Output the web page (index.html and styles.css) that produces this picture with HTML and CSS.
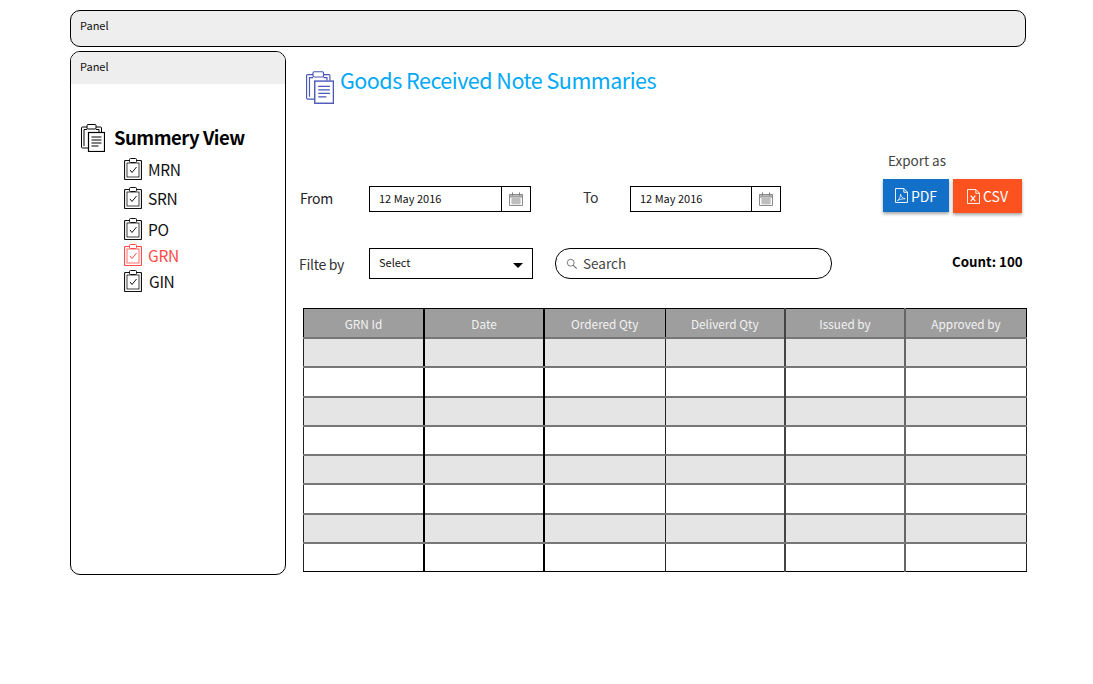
FILE: index.html
```html
<!DOCTYPE html>
<html lang="en">
<head>
    <meta charset="utf-8" />
    <title>Goods Received Note Summaries</title>
    <link rel="stylesheet" href="styles.css">
</head>
<body>
    <svg class="defs" width="0" height="0">
        <symbol id="iconStack" viewBox="0 0 24 28">
            <path d="M6 3H1.500A1 1 0 0 0 .5 4v19a1 1 0 0 0 1 1H7" fill="none" stroke="currentColor" stroke-width="1"/>
            <path d="M15 3h4.500a1 1 0 0 1 1 1v4" fill="none" stroke="currentColor" stroke-width="1"/>
            <path d="M3 22V5.500h3M15 5.500h3V8" fill="none" stroke="currentColor" stroke-width="1"/>
            <rect x="6" y=".5" width="9" height="4.500" rx="1" fill="#fff" stroke="currentColor" stroke-width="1"/>
            <rect x="7.500" y="8.500" width="16" height="19" fill="#fff" stroke="currentColor" stroke-width="1.200"/>
            <path d="M10.500 13h10M10.500 16h10M10.500 19h10M10.500 22h7" fill="none" stroke="currentColor" stroke-width="1"/>
        </symbol>
        <symbol id="iconCheck" viewBox="0 0 18 22">
            <path d="M5.500 2.500H1.500a1 1 0 0 0-1 1v17a1 1 0 0 0 1 1h15a1 1 0 0 0 1-1v-17a1 1 0 0 0-1-1h-4" fill="none" stroke="currentColor" stroke-width="1.200"/>
            <rect x="3" y="5" width="12" height="14" fill="none" stroke="currentColor" stroke-width=".8"/>
            <rect x="5.500" y=".5" width="7" height="4" rx="1" fill="#fff" stroke="currentColor" stroke-width="1"/>
            <path d="M6 12l2 2.500L12.500 9" fill="none" stroke="currentColor" stroke-width="1"/>
        </symbol>
        <symbol id="iconCal" viewBox="0 0 14 14">
            <path d="M.5 2.500h13v11H.5z" fill="#fff" stroke="#8a8a8a"/>
            <path d="M.5 2.500h13V5H.5z" fill="#bbb" stroke="#8a8a8a"/>
            <path d="M3.500 .5v3M10.500 .5v3" stroke="#777"/>
            <path d="M2 7h10M2 9h10M2 11h10M4 6v6.500M6 6v6.500M8 6v6.500M10 6v6.500" stroke="#999" stroke-width=".8"/>
        </symbol>
        <symbol id="iconDoc" viewBox="0 0 14 16">
            <path d="M.5.5h9l4 4v11H.5z" fill="none" stroke="#fff"/>
            <path d="M9.500.5v4h4" fill="none" stroke="#fff"/>
        </symbol>
    </svg>

    <div id="topPanel" class="panelBar topBar">Panel</div>

    <div id="content">
        <div id="sidePanel">
            <div class="panelBar sideBar">Panel</div>
            <div class="treeTitle">
                <svg class="stackIcon"><use href="#iconStack"/></svg>
                <span>Summery View</span>
            </div>
            <ul class="treeList">
                <li class="treeItem treeItemMrn"><svg class="checkIcon"><use href="#iconCheck"/></svg>MRN</li>
                <li class="treeItem treeItemSrn"><svg class="checkIcon"><use href="#iconCheck"/></svg>SRN</li>
                <li class="treeItem treeItemPo"><svg class="checkIcon"><use href="#iconCheck"/></svg>PO</li>
                <li class="treeItem active"><svg class="checkIcon"><use href="#iconCheck"/></svg>GRN</li>
                <li class="treeItem treeItemGin"><svg class="checkIcon"><use href="#iconCheck"/></svg>GIN</li>
            </ul>
        </div>

        <div id="main">
            <div class="pageTitle">
                <svg class="titleIcon"><use href="#iconStack"/></svg>
                <h1>Goods Received Note Summaries</h1>
            </div>

            <div class="dateRow">
                <span class="rowLabel fromLabel">From</span>
                <div class="dateField">
                    <span class="dateText">12 May 2016</span>
                    <span class="dateBtn"><svg class="calIcon"><use href="#iconCal"/></svg></span>
                </div>
                <span class="rowLabel toLabel">To</span>
                <div class="dateField dateFieldTo">
                    <span class="dateText">12 May 2016</span>
                    <span class="dateBtn"><svg class="calIcon"><use href="#iconCal"/></svg></span>
                </div>
                <div class="exportBox">
                    <div class="exportLabel">Export as</div>
                    <div class="exportBtns">
                        <button class="btn btnPdf">
                            <svg class="docIcon" viewBox="0 0 14 16">
                                <use href="#iconDoc"/>
                                <path d="M2.500 13.500c2-1 3.500-4 3.500-7 .5 3 2 4.500 5 5-3 0-6 .5-8.500 2z" fill="none" stroke="#fff" stroke-width=".8"/>
                            </svg>PDF
                        </button>
                        <button class="btn btnCsv">
                            <svg class="docIcon" viewBox="0 0 14 16">
                                <use href="#iconDoc"/>
                                <path d="M4 7l5 6M9 7l-5 6" fill="none" stroke="#fff" stroke-width="1.200"/>
                            </svg>CSV
                        </button>
                    </div>
                </div>
            </div>

            <div class="filterRow">
                <span class="rowLabel filterLabel">Filte by</span>
                <div class="selectBox">
                    <span class="selectText">Select</span>
                    <span class="caret"></span>
                </div>
                <div class="searchBox">
                    <svg class="searchIcon" viewBox="0 0 14 14">
                        <circle cx="5.500" cy="5.500" r="4" fill="none" stroke="#666"/>
                        <path d="M8.500 8.500l4 4" stroke="#666" stroke-width="1.200"/>
                    </svg>
                    <span class="searchText">Search</span>
                </div>
                <div class="countText">Count: 100</div>
            </div>

            <table class="grnTable">
                <thead>
                    <tr>
                        <th>GRN Id</th>
                        <th>Date</th>
                        <th>Ordered Qty</th>
                        <th>Deliverd Qty</th>
                        <th>Issued by</th>
                        <th>Approved by</th>
                    </tr>
                </thead>
                <tbody>
                    <tr class="shade"><td></td><td></td><td></td><td></td><td></td><td></td></tr>
                    <tr><td></td><td></td><td></td><td></td><td></td><td></td></tr>
                    <tr class="shade"><td></td><td></td><td></td><td></td><td></td><td></td></tr>
                    <tr><td></td><td></td><td></td><td></td><td></td><td></td></tr>
                    <tr class="shade"><td></td><td></td><td></td><td></td><td></td><td></td></tr>
                    <tr><td></td><td></td><td></td><td></td><td></td><td></td></tr>
                    <tr class="shade"><td></td><td></td><td></td><td></td><td></td><td></td></tr>
                    <tr><td></td><td></td><td></td><td></td><td></td><td></td></tr>
                </tbody>
            </table>
        </div>
    </div>
</body>
</html>
```

FILE: styles.css
```css
body {
    margin: 0;
    padding: 10px 0 0 70px;
    background-color: white;
    color: black;
    font-family: "Noto Sans CJK JP", "Noto Sans", sans-serif;
    font-size: 14px;
}

.defs {
    position: absolute;
}

.panelBar {
    background-color: #eeeeee;
    font-size: 11px;
    line-height: 16px;
    color: #111;
    box-sizing: border-box;
}

.topBar {
    width: 956px;
    height: 37px;
    padding: 6px 9px;
    border: 1px solid black;
    border-radius: 10px;
}

#content {
    display: flex;
    margin-top: 4px;
}

#sidePanel {
    width: 216px;
    height: 524px;
    box-sizing: border-box;
    border: 1px solid black;
    border-radius: 10px;
    overflow: hidden;
}

.sideBar {
    height: 32px;
    padding: 6px 9px;
}

.treeTitle {
    display: flex;
    align-items: center;
    margin: 39px 0 0 10px;
    font-size: 18.500px;
    font-weight: bold;
    letter-spacing: -0.5px;
    line-height: 28px;
}

.treeTitle span {
    padding-bottom: 2px;
}

.stackIcon {
    width: 24px;
    height: 28px;
    margin-right: 9px;
}

.treeList {
    list-style: none;
    margin: 3px 0 0 53px;
    padding: 0;
}

.treeItem {
    display: flex;
    align-items: center;
    height: 26px;
    font-size: 15.500px;
    letter-spacing: -0.3px;
    color: #111;
}

.treeItemSrn {
    margin-top: 3px;
}

.treeItemPo {
    margin-top: 5px;
}

.treeItem.active {
    color: #ff4a45;
}

.checkIcon {
    width: 18px;
    height: 22px;
    margin-right: 6px;
}

.treeItemGin .checkIcon {
    margin-right: 7px;
}

#main {
    width: 741px;
    padding-left: 14px;
    box-sizing: border-box;
}

.pageTitle {
    display: flex;
    align-items: flex-start;
    height: 52px;
    margin-top: 20px;
    margin-left: 6px;
}

.titleIcon {
    width: 28px;
    height: 33px;
    margin-right: 6px;
    color: #4a56b8;
}

h1 {
    margin: 0;
    font-size: 21.500px;
    font-weight: normal;
    letter-spacing: -0.5px;
    line-height: 18px;
    color: #03a9f4;
    white-space: nowrap;
}

.dateRow {
    display: flex;
    align-items: flex-end;
    margin-top: 27px;
}

.rowLabel {
    color: #222;
    font-size: 14px;
    letter-spacing: -0.3px;
    line-height: 24px;
}

.fromLabel {
    width: 69px;
    padding-bottom: 3px;
}

.toLabel {
    width: 47px;
    margin-left: 52px;
    padding-bottom: 4px;
    color: #333;
}

.dateField {
    display: flex;
    width: 162px;
    height: 26px;
    box-sizing: border-box;
    border: 1px solid black;
    margin-bottom: 1px;
}

.dateFieldTo {
    width: 151px;
}

.dateText {
    flex: 1;
    padding-left: 9px;
    font-size: 11px;
    line-height: 22px;
    color: #111;
}

.dateBtn {
    display: flex;
    align-items: center;
    justify-content: center;
    width: 28px;
    border-left: 1px solid black;
}

.calIcon {
    width: 14px;
    height: 14px;
}

.exportBox {
    margin-left: 102px;
}

.exportLabel {
    margin-left: 5px;
    margin-bottom: 9px;
    font-size: 13.500px;
    line-height: 20px;
    color: #444;
}

.exportBtns {
    display: flex;
    gap: 4px;
}

.btn {
    display: flex;
    align-items: center;
    justify-content: center;
    height: 33px;
    padding: 0;
    border: none;
    color: white;
    font-family: inherit;
    font-size: 14px;
    box-shadow: 0 2px 3px rgba(0, 0, 0, 0.35);
}

.btnPdf {
    width: 66px;
    background-color: #1270c9;
}

.btnCsv {
    width: 69px;
    height: 34px;
    background-color: #fb521f;
}

.docIcon {
    width: 13px;
    height: 15px;
    margin-right: 3px;
}

.filterRow {
    display: flex;
    align-items: center;
    height: 31px;
    margin-top: 35px;
}

.filterLabel {
    width: 70px;
    margin-left: -1px;
    color: #333;
}

.selectBox {
    display: flex;
    align-items: center;
    justify-content: space-between;
    width: 164px;
    height: 31px;
    box-sizing: border-box;
    border: 1px solid black;
    padding: 0 9px;
    font-size: 11px;
    color: #111;
}

.selectText {
    padding-bottom: 3px;
}

.caret {
    width: 0;
    height: 0;
    margin-top: 4px;
    border-left: 5px solid transparent;
    border-right: 5px solid transparent;
    border-top: 5px solid black;
}

.searchBox {
    display: flex;
    align-items: center;
    width: 277px;
    height: 31px;
    box-sizing: border-box;
    margin-left: 22px;
    border: 1px solid black;
    border-radius: 15px;
    padding-left: 10px;
    font-size: 13.500px;
    color: #444;
}

.searchText {
    padding-bottom: 2px;
}

.searchIcon {
    width: 12px;
    height: 12px;
    margin-right: 5px;
}

.countText {
    margin-left: 120px;
    margin-top: -5px;
    font-size: 13.300px;
    font-weight: bold;
    white-space: nowrap;
}

.grnTable {
    width: 724px;
    height: 264px;
    margin: 29px 0 0 3px;
    border-collapse: collapse;
    table-layout: fixed;
}

.grnTable th {
    height: 28px;
    padding: 0;
    background-color: #9e9e9e;
    border: 1px solid black;
    color: #f2f2f2;
    font-size: 11.800px;
    font-weight: normal;
}

.grnTable th:nth-child(1) {
    width: 119px;
}

.grnTable th:nth-child(2) {
    width: 118px;
}

.grnTable th:nth-child(3) {
    width: 119.500px;
}

.grnTable th:nth-child(4) {
    width: 118.500px;
}

.grnTable th:nth-child(5) {
    width: 118px;
}

.grnTable td {
    height: 26px;
    padding: 0;
    border: 1px solid #222;
    border-top-color: #777;
    border-bottom-color: #777;
}

.grnTable th:nth-child(-n+2),
.grnTable td:nth-child(-n+2) {
    border-right: 2px solid black;
}

.grnTable th:nth-child(4),
.grnTable td:nth-child(4) {
    border-right: 2px solid #444;
}

.grnTable th:nth-child(5),
.grnTable td:nth-child(5) {
    border-right: 2px solid #666;
}

.grnTable tr:last-child td {
    border-bottom-color: black;
}

.shade td {
    background-color: #e5e5e5;
    border-top-width: 2px;
    border-bottom-width: 2px;
}
```
